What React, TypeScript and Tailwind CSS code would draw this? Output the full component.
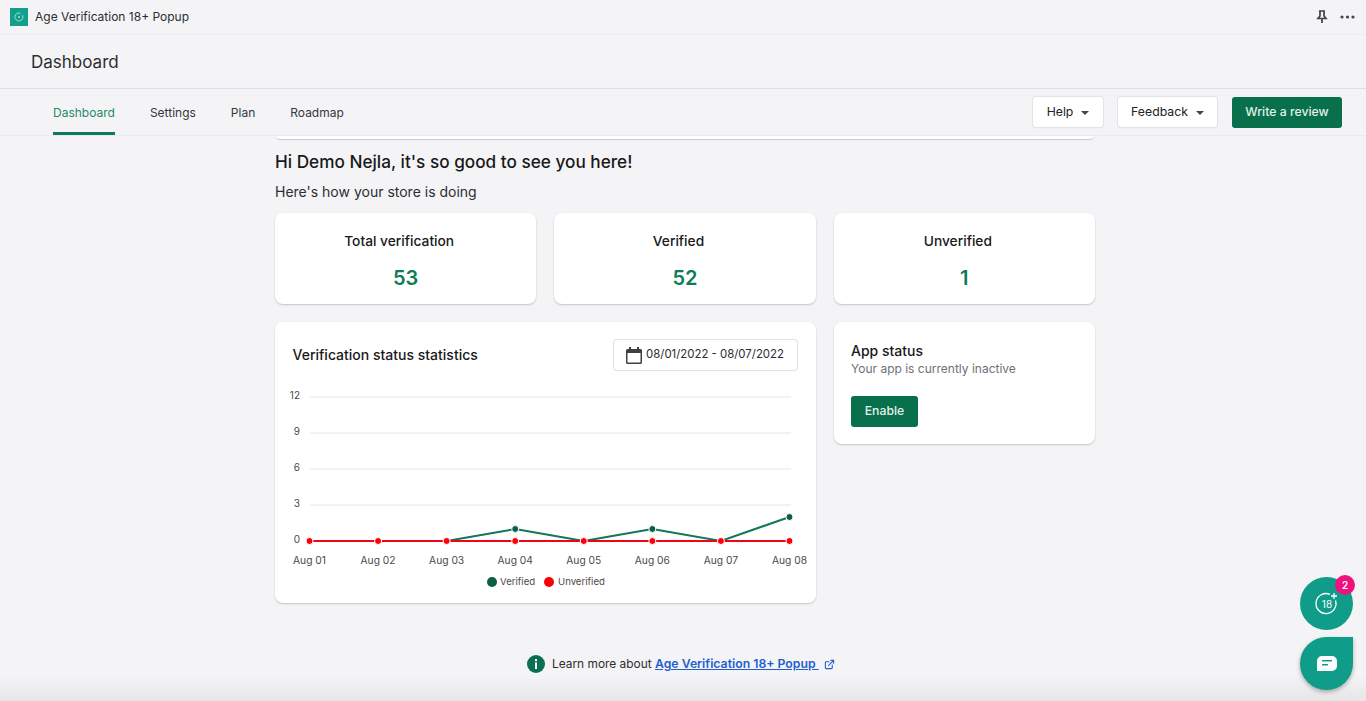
import { ExternalLink } from "lucide-react";

const tabs = ["Dashboard", "Settings", "Plan", "Roadmap"];

const stats = [
  { label: "Total verification", value: "53" },
  { label: "Verified", value: "52" },
  { label: "Unverified", value: "1" },
];

const days = ["Aug 01", "Aug 02", "Aug 03", "Aug 04", "Aug 05", "Aug 06", "Aug 07", "Aug 08"];
const verified = [0, 0, 0, 1, 0, 1, 0, 2];
const ticks = [12, 9, 6, 3, 0];

const xAt = (i: number) => 34.5 + i * 68.57;
const yAt = (v: number) => 156 - v * 12;

function VerificationChart() {
  const greenPoints = verified.map((v, i) => `${xAt(i)},${yAt(v)}`).join(" ");

  return (
    <svg width="541" height="210" viewBox="0 0 541 210" className="block">
      {ticks.map((t) => (
        <g key={t}>
          {t > 0 && <line x1="35" x2="516" y1={yAt(t)} y2={yAt(t)} stroke="#e6e6e8" strokeWidth="1" />}
          <text x="25" y={yAt(t) + 2} textAnchor="end" fontSize="10" fill="#4a4a4a" fontFamily="Inter, sans-serif">
            {t}
          </text>
        </g>
      ))}
      <polyline points={greenPoints} fill="none" stroke="#11765a" strokeWidth="2" />
      {verified.map((v, i) =>
        v > 0 ? (
          <circle key={days[i]} cx={xAt(i)} cy={yAt(v)} r="3.5" fill="#0b5f43" stroke="#ffffff" strokeWidth="1" />
        ) : null,
      )}
      <line x1={xAt(0)} x2={xAt(7)} y1={yAt(0)} y2={yAt(0)} stroke="#f00512" strokeWidth="2" />
      {days.map((d, i) => (
        <g key={d}>
          <circle cx={xAt(i)} cy={yAt(0)} r="3.5" fill="#fb0007" stroke="#ffffff" strokeWidth="1" />
          <text x={xAt(i)} y="179" textAnchor="middle" fontSize="10.25" fill="#4a4a4a" fontFamily="Inter, sans-serif">
            {d}
          </text>
        </g>
      ))}
      <circle cx="217" cy="197" r="5" fill="#0b5f43" />
      <text x="225" y="200" fontSize="9.6" fill="#4a4a4a" fontFamily="Inter, sans-serif">
        Verified
      </text>
      <circle cx="274" cy="197" r="5" fill="#fb0007" />
      <text x="283" y="200" fontSize="9.6" fill="#4a4a4a" fontFamily="Inter, sans-serif">
        Unverified
      </text>
    </svg>
  );
}

function Caret() {
  return <span className="h-0 w-0 border-x-[4px] border-t-[4px] border-x-transparent border-t-[#44474a]" />;
}

export default function App() {
  return (
    <div className="relative flex h-[701px] w-[1366px] flex-col overflow-hidden bg-[#f4f4f6] font-['Inter',sans-serif] text-[#202223]">
      <div className="flex h-[35px] shrink-0 items-center justify-between border-b border-[#ececee] pl-[10px] pr-[11px]">
        <div className="flex items-center gap-[7px]">
          <div className="flex h-[18px] w-[18px] items-center justify-center bg-[#12a08c]">
            <svg width="10" height="10" viewBox="0 0 10 10" fill="none" stroke="#a5ded5" strokeWidth="1">
              <path d="M8.5 3.2A4 4 0 1 1 6.5 1.3" />
              <circle cx="5" cy="5" r="1" fill="#a5ded5" stroke="none" />
            </svg>
          </div>
          <span className="text-[12px] text-[#2c2e30]">Age Verification 18+ Popup</span>
        </div>
        <div className="flex items-center gap-[12px]">
          <svg width="12" height="14" viewBox="0 0 12 14" fill="none" stroke="#3f4245" strokeWidth="1.7">
            <path d="M3 1h6M4 1v5L2 8.5h8L8 6V1M6 8.5V13" />
          </svg>
          <svg width="15" height="4" viewBox="0 0 15 4" fill="#44474a">
            <circle cx="2" cy="2" r="1.6" />
            <circle cx="7.5" cy="2" r="1.6" />
            <circle cx="13" cy="2" r="1.6" />
          </svg>
        </div>
      </div>

      <div className="flex h-[54px] shrink-0 items-center border-b border-[#dfe0e2] pl-[31px] pt-[3px]">
        <h1 className="text-[17px] font-normal text-[#2c2e30]">Dashboard</h1>
      </div>

      <div className="flex h-[47px] shrink-0 items-center justify-between border-b border-[#ebebed] pl-[53px] pr-[24px]">
        <nav className="flex h-full gap-[35px]">
          {tabs.map((tab, i) => (
            <div
              key={tab}
              className={`flex h-full items-center border-b-[3px] pt-[5px] text-[12px] ${
                i === 0 ? "border-[#0f7a56] text-[#1f8a63]" : "border-transparent text-[#34373a]"
              }`}
            >
              {tab}
            </div>
          ))}
        </nav>
        <div className="flex items-center gap-[15px]">
          <button className="flex h-[30px] w-[70px] items-center justify-center gap-[8px] rounded-[3px] bg-white pt-[1px] text-[12.25px] shadow-[0_0_0_1px_#e2e3e5,0_1px_1px_rgba(0,0,0,0.12)]">
            Help
            <Caret />
          </button>
          <button className="flex h-[30px] w-[99px] items-center justify-center gap-[8px] rounded-[3px] bg-white pt-[1px] text-[12.25px] shadow-[0_0_0_1px_#e2e3e5,0_1px_1px_rgba(0,0,0,0.12)]">
            Feedback
            <Caret />
          </button>
          <button className="flex h-[31px] w-[110px] items-center justify-center rounded-[3px] bg-[#08704b] text-[12.25px] font-medium text-[#e3f1eb]">
            Write a review
          </button>
        </div>
      </div>

      <main className="ml-[275px] flex w-[820px] flex-col">
        <div className="mx-[2px] h-[3px] rounded-b-lg bg-white shadow-[0_1px_1px_rgba(0,0,0,0.18)]" />
        <h2 className="mt-[11px] text-[17.2px] leading-[24px] font-medium text-[#18191a]">
          Hi Demo Nejla, it's so good to see you here!
        </h2>
        <p className="mt-[8px] text-[14px] leading-[20px] text-[#2c2e30]">Here's how your store is doing</p>

        <div className="mt-[11px] grid grid-cols-3 gap-[18px]">
          {stats.map((s) => (
            <div
              key={s.label}
              className="flex h-[91px] flex-col items-center rounded-lg bg-white pt-[18px] shadow-[0_1px_2px_rgba(0,0,0,0.2)]"
            >
              <span className="mr-[13px] text-[13.75px] leading-[20px] font-medium text-[#18191a]">{s.label}</span>
              <span className="mt-[13px] text-[20px] leading-[28px] font-semibold text-[#0e7c55]">{s.value}</span>
            </div>
          ))}
        </div>

        <div className="mt-[18px] grid grid-cols-[541px_1fr] items-start gap-[18px]">
          <section className="h-[281px] rounded-lg bg-white shadow-[0_1px_2px_rgba(0,0,0,0.2)]">
            <div className="flex h-[63px] items-center justify-between pl-[17.5px] pr-[19px] pt-[3px]">
              <h3 className="mb-[2px] text-[14px] font-medium text-[#18191a]">Verification status statistics</h3>
              <div className="flex h-[30px] w-[183px] items-center justify-center gap-[4px] rounded-[3px] bg-white pr-[1px] text-[11.4px] text-[#2c2e30] shadow-[0_0_0_1px_#e2e3e5,0_1px_1px_rgba(0,0,0,0.12)]">
                <svg width="16" height="17" viewBox="0 0 16 17" fill="#3f4245">
                  <path
                    fillRule="evenodd"
                    d="M3 0h2v2h6V0h2v2h1.5A1.5 1.5 0 0 1 16 3.5v12a1.5 1.5 0 0 1-1.5 1.5h-13A1.5 1.5 0 0 1 0 15.5v-12A1.5 1.5 0 0 1 1.5 2H3zM1.5 6v9.5h13V6z"
                  />
                </svg>
                08/01/2022 - 08/07/2022
              </div>
            </div>
            <VerificationChart />
          </section>

          <section className="h-[122px] rounded-lg bg-white pl-[17px] pt-[20px] shadow-[0_1px_2px_rgba(0,0,0,0.2)]">
            <h3 className="text-[14px] leading-[18px] font-medium text-[#18191a]">App status</h3>
            <p className="text-[12px] leading-[18px] text-[#6d7175]">Your app is currently inactive</p>
            <button className="mt-[18px] flex h-[31px] w-[67px] items-center justify-center rounded-[3px] bg-[#08704b] text-[12.25px] font-medium text-[#e3f1eb]">
              Enable
            </button>
          </section>
        </div>

        <div className="mt-[52px] ml-[252px] flex items-center gap-[5px] text-[11.9px] text-[#2c2e30]">
          <svg width="18" height="18" viewBox="0 0 18 18" className="mr-[2px]">
            <circle cx="9" cy="9" r="9" fill="#0b7050" />
            <rect x="8" y="4" width="2" height="2.2" fill="#ffffff" />
            <rect x="8" y="7.5" width="2" height="6.5" fill="#ffffff" />
          </svg>
          <span>
            Learn more about{" "}
            <a className="text-[12.25px] font-semibold text-[#1f5fd0] underline">Age Verification 18+ Popup&nbsp;</a>
          </span>
          <ExternalLink size={11} strokeWidth={2.4} className="text-[#1f5fd0]" />
        </div>
      </main>

      <div className="pointer-events-none absolute inset-x-0 bottom-0 h-[26px] bg-gradient-to-b from-transparent to-[#e6e6e8]" />

      <div className="absolute left-[1300px] top-[577px] flex h-[53px] w-[53px] items-center justify-center rounded-full bg-[#0f9d8a]">
        <svg width="26" height="26" viewBox="0 0 26 26" fill="none" stroke="#ffffff" strokeWidth="1.3">
          <path d="M21.5 9.5A10 10 0 1 1 16 3.4" />
          <path d="M20 2v6M17 5h6" />
          <text x="13" y="17" textAnchor="middle" fontSize="10" fill="#ffffff" stroke="none" fontFamily="Inter, sans-serif">
            18
          </text>
        </svg>
        <span className="absolute -right-[2px] -top-[2px] flex h-[20px] w-[20px] items-center justify-center rounded-full bg-[#f0107e] text-[10px] font-semibold text-white">
          2
        </span>
      </div>

      <div className="absolute left-[1300px] top-[637px] flex h-[53px] w-[53px] items-center justify-center rounded-full rounded-tr-[5px] bg-[#0f9d8a] shadow-[0_2px_4px_rgba(0,0,0,0.3)]">
        <svg width="20" height="15" viewBox="0 0 20 15">
          <path
            fillRule="evenodd"
            fill="#ffffff"
            d="M5 0h10a5 5 0 0 1 5 5v5a5 5 0 0 1-5 5H0V5a5 5 0 0 1 5-5zM5 4v1.6h10V4zM5 8v1.6h6V8z"
          />
        </svg>
      </div>
    </div>
  );
}
